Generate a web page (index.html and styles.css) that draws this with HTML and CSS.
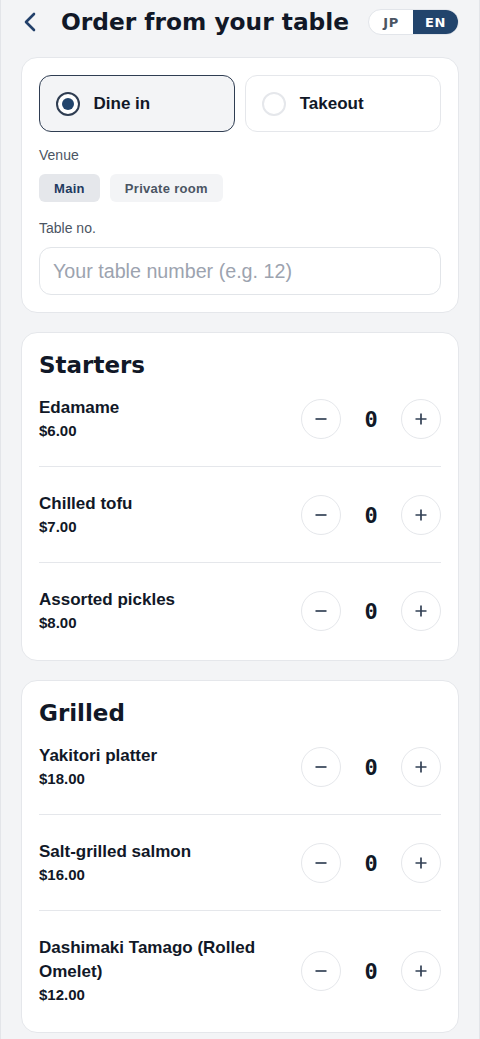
FILE: index.html
```html
<!DOCTYPE html>
<html lang="en">
<head>
<meta charset="utf-8">
<meta name="viewport" content="width=device-width, initial-scale=1">
<title>Order from your table</title>
<link rel="stylesheet" href="styles.css">
</head>
<body>
<div class="app">
  <header class="topbar">
    <button class="back" aria-label="Back">
      <svg width="20" height="22" viewBox="0 0 20 22"><path d="M13 3 L5 11 L13 19" fill="none" stroke="#22406a" stroke-width="2.6" stroke-linecap="round" stroke-linejoin="round"/></svg>
    </button>
    <h1 class="title">Order from your table</h1>
    <div class="lang">
      <span class="lang-opt">JP</span>
      <span class="lang-opt active">EN</span>
    </div>
  </header>

  <section class="card">
    <div class="modes">
      <div class="mode selected"><span class="radio on"></span><span class="mode-label">Dine in</span></div>
      <div class="mode"><span class="radio"></span><span class="mode-label">Takeout</span></div>
    </div>
    <div class="field-label">Venue</div>
    <div class="chips">
      <span class="chip active">Main</span>
      <span class="chip">Private room</span>
    </div>
    <div class="field-label second">Table no.</div>
    <input class="input" type="text" placeholder="Your table number (e.g. 12)">
  </section>

  <section class="card menu">
    <h2 class="section-title">Starters</h2>
    <div class="item">
      <div class="info"><div class="name">Edamame</div><div class="price">$6.00</div></div>
      <div class="stepper"><button class="step"><svg width="14" height="14" viewBox="0 0 14 14"><path d="M1.5 7 H12.5" stroke="#334155" stroke-width="1.7"/></svg></button><span class="qty">0</span><button class="step"><svg width="14" height="14" viewBox="0 0 14 14"><path d="M1.5 7 H12.5 M7 1.5 V12.5" stroke="#334155" stroke-width="1.7"/></svg></button></div>
    </div>
    <div class="item">
      <div class="info"><div class="name">Chilled tofu</div><div class="price">$7.00</div></div>
      <div class="stepper"><button class="step"><svg width="14" height="14" viewBox="0 0 14 14"><path d="M1.5 7 H12.5" stroke="#334155" stroke-width="1.7"/></svg></button><span class="qty">0</span><button class="step"><svg width="14" height="14" viewBox="0 0 14 14"><path d="M1.5 7 H12.5 M7 1.5 V12.5" stroke="#334155" stroke-width="1.7"/></svg></button></div>
    </div>
    <div class="item">
      <div class="info"><div class="name">Assorted pickles</div><div class="price">$8.00</div></div>
      <div class="stepper"><button class="step"><svg width="14" height="14" viewBox="0 0 14 14"><path d="M1.5 7 H12.5" stroke="#334155" stroke-width="1.7"/></svg></button><span class="qty">0</span><button class="step"><svg width="14" height="14" viewBox="0 0 14 14"><path d="M1.5 7 H12.5 M7 1.5 V12.5" stroke="#334155" stroke-width="1.7"/></svg></button></div>
    </div>
  </section>

  <section class="card menu">
    <h2 class="section-title">Grilled</h2>
    <div class="item">
      <div class="info"><div class="name">Yakitori platter</div><div class="price">$18.00</div></div>
      <div class="stepper"><button class="step"><svg width="14" height="14" viewBox="0 0 14 14"><path d="M1.5 7 H12.5" stroke="#334155" stroke-width="1.7"/></svg></button><span class="qty">0</span><button class="step"><svg width="14" height="14" viewBox="0 0 14 14"><path d="M1.5 7 H12.5 M7 1.5 V12.5" stroke="#334155" stroke-width="1.7"/></svg></button></div>
    </div>
    <div class="item">
      <div class="info"><div class="name">Salt-grilled salmon</div><div class="price">$16.00</div></div>
      <div class="stepper"><button class="step"><svg width="14" height="14" viewBox="0 0 14 14"><path d="M1.5 7 H12.5" stroke="#334155" stroke-width="1.7"/></svg></button><span class="qty">0</span><button class="step"><svg width="14" height="14" viewBox="0 0 14 14"><path d="M1.5 7 H12.5 M7 1.5 V12.5" stroke="#334155" stroke-width="1.7"/></svg></button></div>
    </div>
    <div class="item">
      <div class="info"><div class="name">Dashimaki Tamago (Rolled Omelet)</div><div class="price">$12.00</div></div>
      <div class="stepper"><button class="step"><svg width="14" height="14" viewBox="0 0 14 14"><path d="M1.5 7 H12.5" stroke="#334155" stroke-width="1.7"/></svg></button><span class="qty">0</span><button class="step"><svg width="14" height="14" viewBox="0 0 14 14"><path d="M1.5 7 H12.5 M7 1.5 V12.5" stroke="#334155" stroke-width="1.7"/></svg></button></div>
    </div>
  </section>
</div>
</body>
</html>
```
FILE: styles.css
```css
* { box-sizing: border-box; }
html, body { margin: 0; padding: 0; }
body {
  background: #f3f4f6;
  font-family: "Liberation Sans", Arial, sans-serif;
  color: #111827;
}
.app {
  min-height: 1039px;
  background: #f3f4f6;
  border-left: 1px solid #e3e5e9;
  border-right: 1px solid #e3e5e9;
  padding: 6px 20px 20px;
}
.topbar {
  display: flex;
  align-items: center;
  height: 32px;
  margin-bottom: 19px;
}
.back {
  width: 20px;
  height: 22px;
  padding: 0;
  border: 0;
  background: none;
  display: flex;
  align-items: center;
  justify-content: center;
  margin-right: 20px;
}
.title {
  flex: 1;
  margin: 0;
  font-family: "DejaVu Sans", sans-serif;
  font-weight: bold;
  font-size: 23.3px;
  line-height: 32px;
  color: #111827;
  white-space: nowrap;
}
.lang {
  display: flex;
  height: 26px;
  border: 1px solid #e2e5ea;
  border-radius: 13px;
  overflow: hidden;
  background: #fff;
}
.lang-opt {
  display: flex;
  align-items: center;
  justify-content: center;
  width: 44px;
  font-family: "DejaVu Sans", sans-serif;
  font-weight: bold;
  font-size: 13px;
  letter-spacing: 0.5px;
  color: #4b5563;
}
.lang-opt.active {
  width: 45px;
  background: #22446c;
  color: #fff;
}

.card {
  background: #fff;
  border: 1px solid #e5e7eb;
  border-radius: 16px;
  padding: 17px 17px;
  margin-bottom: 19px;
}
.modes {
  display: flex;
  gap: 10px;
}
.mode {
  flex: 1;
  height: 57px;
  display: flex;
  align-items: center;
  gap: 14px;
  padding-left: 16px;
  border: 1px solid #e5e7eb;
  border-radius: 12px;
  background: #fff;
}
.mode.selected {
  border: 1.5px solid #2f3d52;
  background: #f3f4f6;
  padding-left: 15.5px;
}
.radio {
  width: 24px;
  height: 24px;
  border-radius: 50%;
  border: 2px solid #e5e7eb;
  background: #fff;
  display: flex;
  align-items: center;
  justify-content: center;
}
.radio.on {
  border-color: #2f3d52;
}
.radio.on::after {
  content: "";
  width: 12px;
  height: 12px;
  border-radius: 50%;
  background: #22446c;
}
.mode-label {
  font-size: 17px;
  font-weight: bold;
  color: #111827;
}
.field-label {
  margin-top: 13px;
  font-size: 14px;
  line-height: 20px;
  color: #4b5563;
}
.field-label.second { margin-top: 16px; }
.chips {
  display: flex;
  gap: 10px;
  margin-top: 9px;
}
.chip {
  height: 28px;
  padding: 0 15px;
  display: flex;
  align-items: center;
  border-radius: 6px;
  background: #f3f4f6;
  font-family: "Liberation Sans", Arial, sans-serif;
  font-weight: bold;
  font-size: 13px;
  letter-spacing: 0.3px;
  color: #4b5563;
}
.chip.active {
  background: #e5e7eb;
  color: #1f3a5f;
}
.input {
  display: block;
  width: 100%;
  height: 48px;
  margin-top: 9px;
  padding: 0 13px;
  border: 1px solid #e2e5e9;
  border-radius: 12px;
  font-family: "Liberation Sans", Arial, sans-serif;
  font-size: 19.7px;
  color: #111827;
  background: #fff;
  outline: none;
}
.input::placeholder { color: #9ca3af; }

.section-title {
  margin: 0 0 16px;
  font-family: "DejaVu Sans", sans-serif;
  font-weight: bold;
  font-size: 23px;
  line-height: 30px;
  color: #111827;
}
.item {
  display: flex;
  align-items: center;
  gap: 16px;
  padding: 25px 0 24px;
  border-bottom: 1px solid #e5e7eb;
}
.item:first-of-type { padding-top: 0; }
.item:last-child { border-bottom: 0; padding-bottom: 9px; }
.info { flex: 1; min-width: 0; }
.name {
  font-size: 17px;
  line-height: 24px;
  font-weight: bold;
  color: #111827;
}
.price {
  font-size: 15px;
  line-height: 22px;
  font-weight: bold;
  color: #111827;
}
.stepper {
  display: flex;
  align-items: center;
  gap: 8px;
}
.step {
  width: 40px;
  height: 40px;
  padding: 0;
  border: 1px solid #e5e7eb;
  border-radius: 50%;
  background: #fff;
  display: flex;
  align-items: center;
  justify-content: center;
}
.qty {
  width: 44px;
  text-align: center;
  font-family: "DejaVu Sans Mono", monospace;
  font-weight: bold;
  font-size: 22px;
  color: #111827;
}
```
